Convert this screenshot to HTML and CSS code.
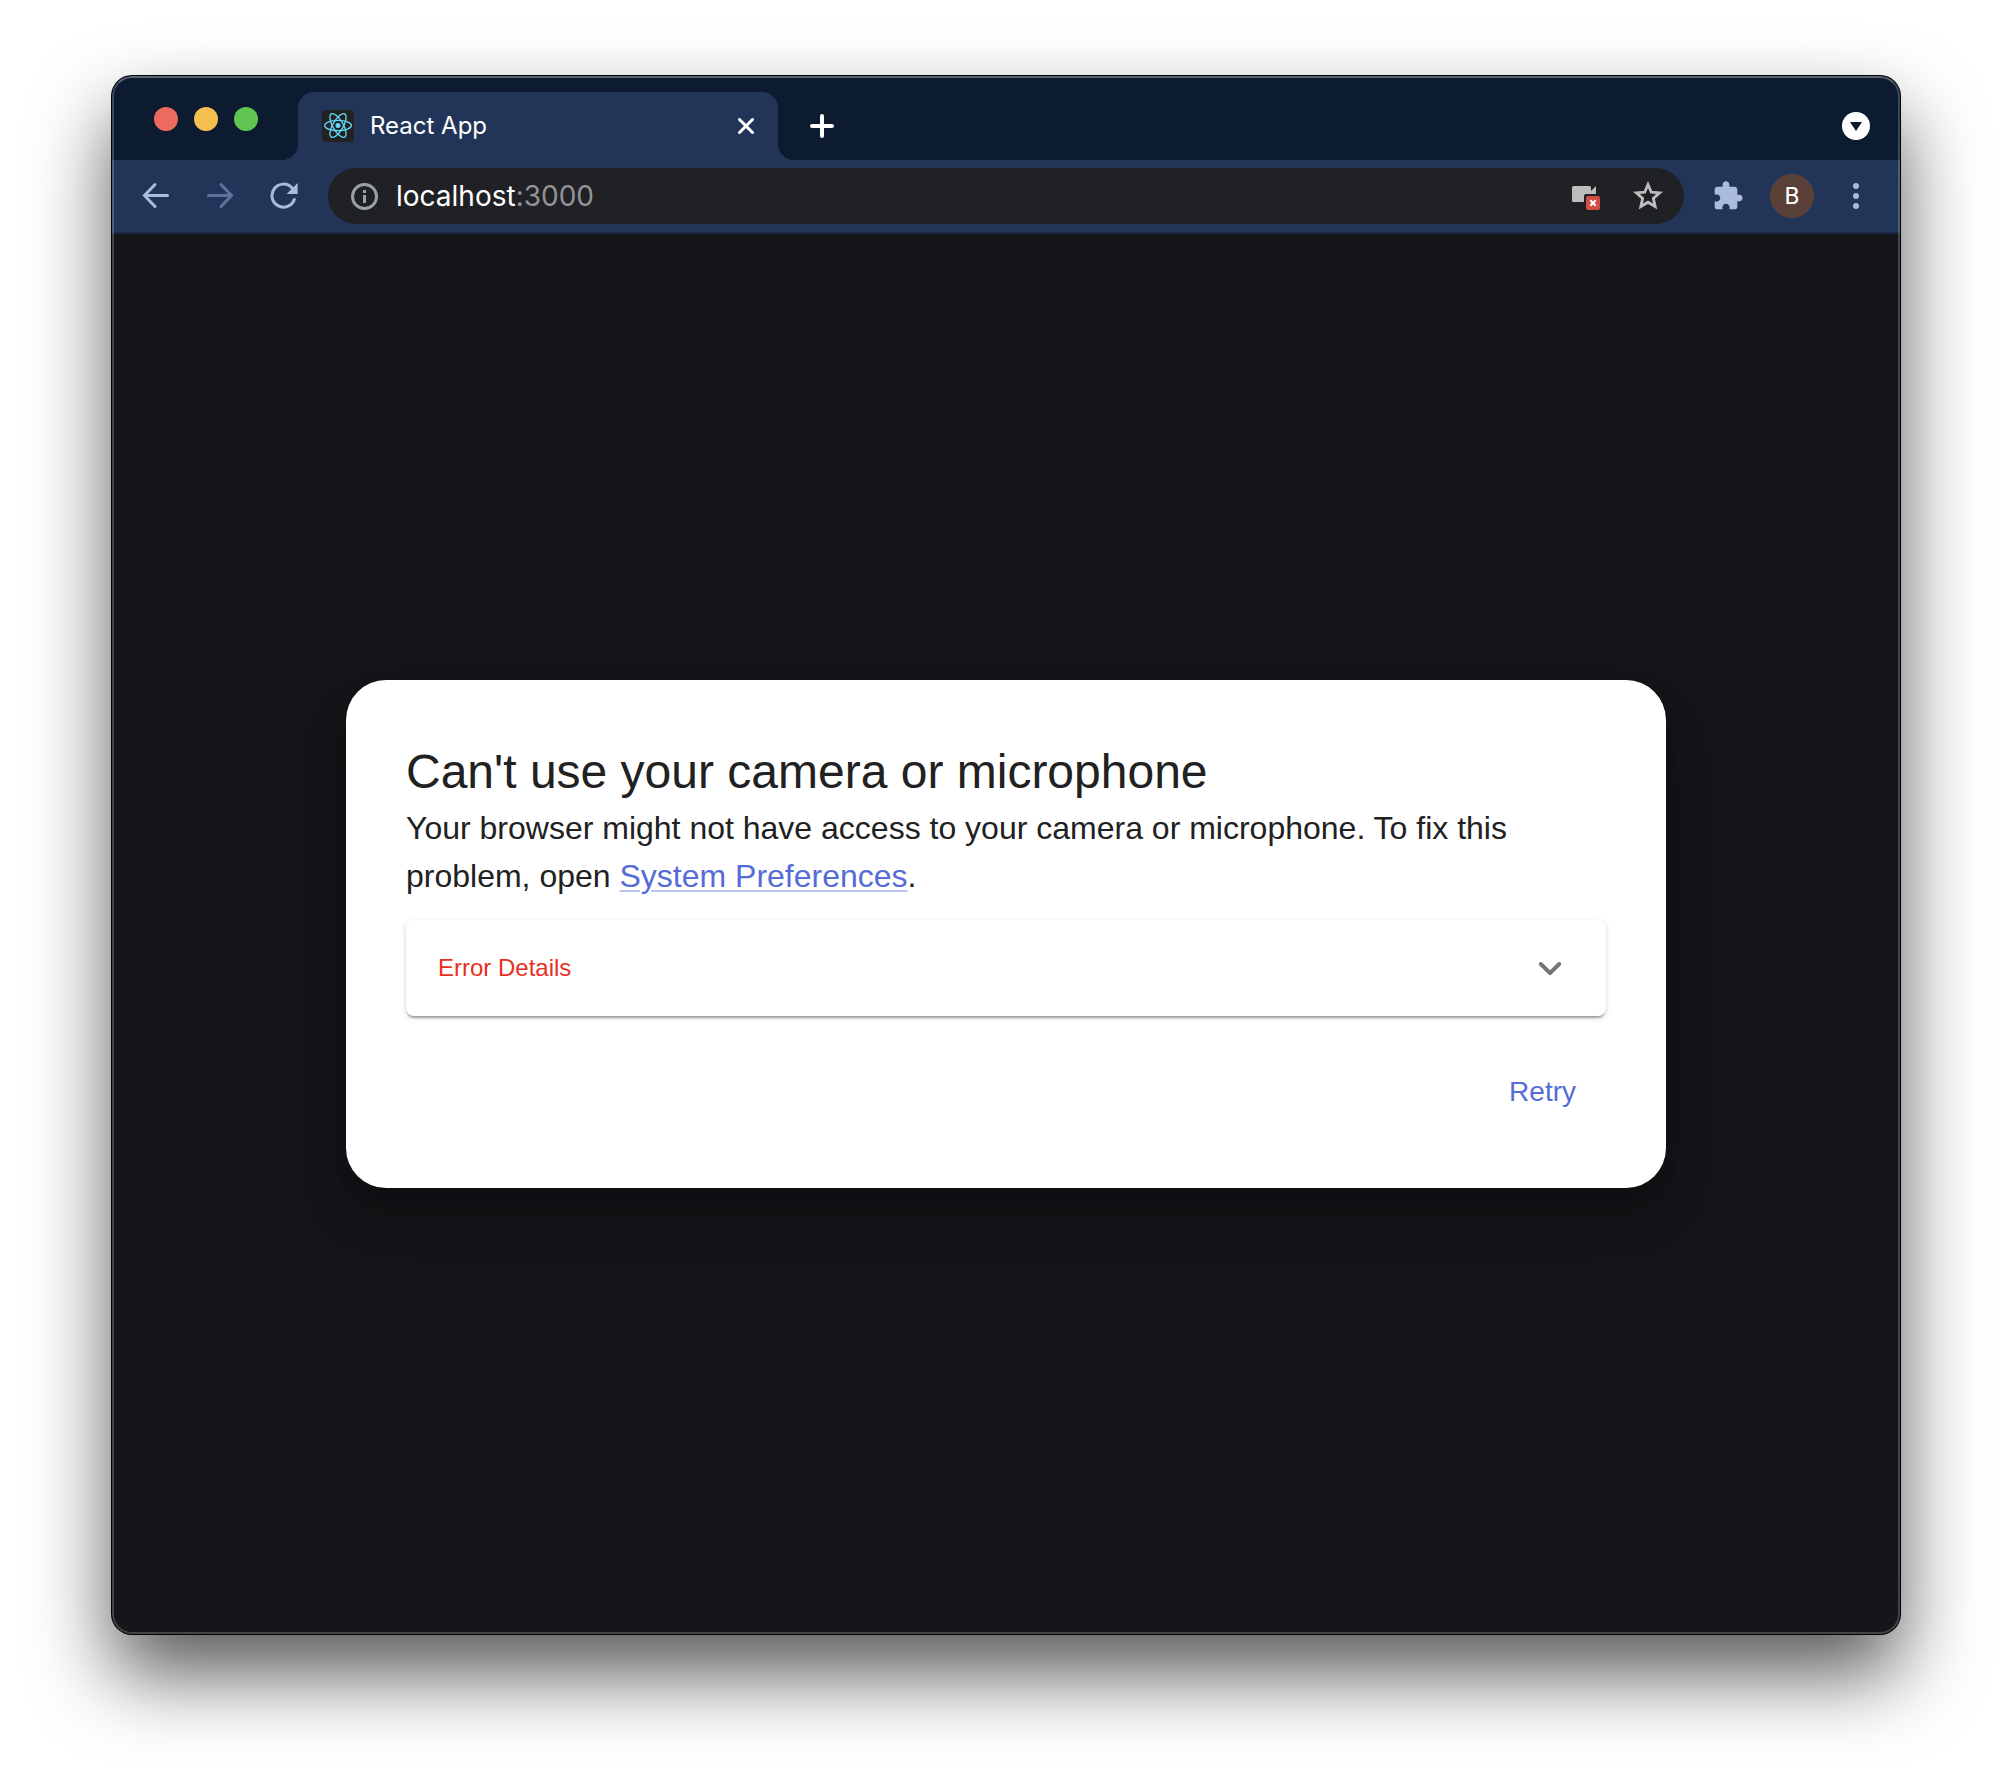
FILE: index.html
```html
<!DOCTYPE html>
<html lang="en">
<head>
<meta charset="utf-8">
<meta name="viewport" content="width=device-width, initial-scale=1">
<title>React App</title>
<link rel="stylesheet" href="styles.css">
</head>
<body>
<div class="window">
  <header class="tab-strip">
    <div class="lights">
      <button class="light light-close" aria-label="Close window"></button>
      <button class="light light-min" aria-label="Minimize window"></button>
      <button class="light light-max" aria-label="Zoom window"></button>
    </div>
    <div class="tab">
      <svg class="favicon" viewBox="0 0 32 32" aria-hidden="true">
        <rect width="32" height="32" rx="4" fill="#222"/>
        <g fill="none" stroke="#61dafb" stroke-width="1.3">
          <ellipse cx="16" cy="15.5" rx="13.4" ry="5.2"/>
          <ellipse cx="16" cy="15.5" rx="13.4" ry="5.2" transform="rotate(60 16 15.5)"/>
          <ellipse cx="16" cy="15.5" rx="13.4" ry="5.2" transform="rotate(120 16 15.5)"/>
        </g>
        <circle cx="16" cy="15.5" r="2.5" fill="#61dafb"/>
      </svg>
      <span class="tab-title">React App</span>
      <button class="icon-button tab-close" aria-label="Close tab">
        <svg width="16" height="16" viewBox="0 0 16 16" fill="none" stroke="#fff" stroke-width="3" stroke-linecap="round"><path d="M1.5 1.5l13 13M14.5 1.5l-13 13"/></svg>
      </button>
    </div>
    <button class="icon-button new-tab" aria-label="New tab">
      <svg width="24" height="24" viewBox="0 0 24 24" fill="none" stroke="#fff" stroke-width="4" stroke-linecap="round"><path d="M12 2v20M2 12h20"/></svg>
    </button>
    <button class="icon-button tab-search" aria-label="Search tabs">
      <svg width="28" height="28" viewBox="0 0 28 28"><circle cx="14" cy="14" r="14" fill="#fff"/><path d="M8 10h12l-6 9z" fill="#0c1b30"/></svg>
    </button>
  </header>

  <nav class="toolbar" aria-label="Browser toolbar">
    <button class="icon-button tool" aria-label="Back">
      <svg width="28" height="28" viewBox="0 0 28 28" fill="none" stroke="#abbbdb" stroke-width="3" stroke-linecap="round"><path d="M25.500 13.500H3M13 2.500L2.500 13.500 13 24.500"/></svg>
    </button>
    <button class="icon-button tool" aria-label="Forward" disabled>
      <svg width="28" height="28" viewBox="0 0 28 28" fill="none" stroke="#62729a" stroke-width="3" stroke-linecap="round"><path d="M2.500 13.500H25M15 2.500l10.500 11L15 24.500"/></svg>
    </button>
    <button class="icon-button tool" aria-label="Reload">
      <svg width="28" height="28" viewBox="0 0 28 28"><path d="M24.300 17.500A11.500 11.500 0 1 1 22 5.900" fill="none" stroke="#abbbdb" stroke-width="3" stroke-linecap="round"/><path d="M27.600 1v11H16.600z" fill="#abbbdb"/></svg>
    </button>
    <div class="address-bar">
      <button class="icon-button site-info" aria-label="View site information">
        <svg width="28" height="28" viewBox="0 0 28 28"><circle cx="14.500" cy="14.500" r="12" fill="none" stroke="#9aa0a6" stroke-width="3"/><path d="M13 8h3v3h-3zM13 13h3v8h-3z" fill="#9aa0a6"/></svg>
      </button>
      <div class="url" role="textbox" aria-label="Address" tabindex="0">localhost<span class="port">:3000</span></div>
      <button class="icon-button camera" aria-label="Camera blocked">
        <svg width="28" height="28" viewBox="0 0 28 28"><path d="M1.500 4H17.500Q19 4 19 5.500V9l5-5v12H12v4H1.500Q0 20 0 18.500V5.500Q0 4 1.500 4z" fill="#bdbdbd"/><rect x="12" y="12" width="16" height="16" rx="2" fill="#202124"/><rect x="14" y="14" width="14" height="14" rx="2" fill="#d14f42"/><path d="M18.300 18.300l5.400 5.400M23.700 18.300l-5.400 5.400" stroke="#fff" stroke-width="2"/></svg>
      </button>
      <button class="icon-button" aria-label="Bookmark this tab">
        <svg width="32" height="32" viewBox="0 0 32 32"><path d="M16 4.500l3.300 7.700 8.300.7-6.300 5.500 1.900 8.100L16 22.200l-7.200 4.300 1.900-8.100-6.300-5.500 8.300-.7z" fill="none" stroke="#bdbdbd" stroke-width="2.800"/></svg>
      </button>
    </div>
    <button class="icon-button tool" aria-label="Extensions">
      <svg width="32" height="32" viewBox="0 0 24 24"><path d="M20.500 11H19V7c0-1.100-.9-2-2-2h-4V3.500C13 2.120 11.880 1 10.500 1S8 2.120 8 3.500V5H4c-1.100 0-1.990.9-1.990 2v3.800H3.500c1.490 0 2.700 1.210 2.700 2.700s-1.210 2.700-2.700 2.700H2V20c0 1.100.9 2 2 2h3.800v-1.500c0-1.490 1.210-2.700 2.700-2.700 1.490 0 2.700 1.210 2.700 2.700V22H17c1.100 0 2-.9 2-2v-4h1.500c1.380 0 2.500-1.120 2.500-2.500S21.880 11 20.500 11z" fill="#abbbdb"/></svg>
    </button>
    <button class="icon-button tool" aria-label="Profile"><span class="avatar">B</span></button>
    <button class="icon-button tool" aria-label="Menu">
      <svg width="28" height="28" viewBox="0 0 28 28" fill="#abbbdb"><circle cx="14" cy="4" r="3"/><circle cx="14" cy="14" r="3"/><circle cx="14" cy="24" r="3"/></svg>
    </button>
  </nav>

  <main class="page">
    <section class="dialog" role="dialog" aria-labelledby="dialog-title">
      <h1 class="dialog-title" id="dialog-title">Can't use your camera or microphone</h1>
      <p class="dialog-text">Your browser might not have access to your camera or microphone. To fix this problem, open <a class="link" href="#preferences">System Preferences</a>.</p>
      <details class="accordion">
        <summary class="accordion-summary">
          <span>Error Details</span>
          <svg width="48" height="48" viewBox="0 0 24 24" aria-hidden="true"><path d="M15.880 9.290L12 13.170 8.120 9.290c-.39-.39-1.020-.39-1.410 0-.39.39-.39 1.020 0 1.410l4.590 4.590c.39.39 1.020.39 1.410 0l4.590-4.590c.39-.39.39-1.020 0-1.410-.39-.38-1.030-.39-1.420 0z" fill="#757575"/></svg>
        </summary>
      </details>
      <div class="dialog-actions">
        <button class="text-button">Retry</button>
      </div>
    </section>
  </main>
</div>
</body>
</html>
```
FILE: styles.css
```css
* {
  box-sizing: border-box;
}

body {
  margin: 0;
  min-height: 100vh;
  display: flex;
  padding: 76px 112px 148px;
  background: #fff;
  font-family: "Liberation Sans", Arial, sans-serif;
}

button {
  margin: 0;
  padding: 0;
  border: 0;
  background: none;
  font: inherit;
  color: inherit;
}

svg {
  display: block;
  flex: none;
}

.window {
  position: relative;
  flex: 1;
  min-width: 0;
  display: flex;
  flex-direction: column;
  border-radius: 20px;
  overflow: hidden;
  background: #151619;
  box-shadow: 0 0 0 1px #000, 0 40px 80px rgba(0, 0, 0, 0.66);
}

/* light rim drawn over the window content */
.window::after {
  content: "";
  position: absolute;
  inset: 0;
  border: 2px solid rgba(255, 255, 255, 0.2);
  border-top-color: rgba(255, 255, 255, 0.32);
  border-radius: inherit;
  pointer-events: none;
}

.icon-button {
  display: flex;
  align-items: center;
  justify-content: center;
}

/* Tab strip */
.tab-strip {
  display: flex;
  align-items: flex-end;
  height: 84px;
  padding-right: 12px;
  background: #0c1b30;
  font-family: Inter, Roboto, sans-serif;
}

.lights {
  display: flex;
  gap: 16px;
  width: 186px;
  height: 84px;
  padding: 31px 0 0 42px;
}

.light {
  width: 24px;
  height: 24px;
  border-radius: 50%;
}

.light-close { background: #ed6a5e; }
.light-min { background: #f5bf4f; }
.light-max { background: #61c554; }

.tab {
  position: relative;
  display: flex;
  align-items: center;
  width: 480px;
  height: 68px;
  padding: 0 16px 0 24px;
  border-radius: 16px 16px 0 0;
  background: #223558;
  color: #fff;
}

.tab::before,
.tab::after {
  content: "";
  position: absolute;
  bottom: 0;
  width: 16px;
  height: 16px;
}

.tab::before {
  right: 100%;
  background: radial-gradient(circle at 0 0, transparent 16px, #223558 16px);
}

.tab::after {
  left: 100%;
  background: radial-gradient(circle at 100% 0, transparent 16px, #223558 16px);
}

.favicon {
  width: 32px;
  height: 32px;
}

.tab-title {
  flex: 1;
  margin-left: 16px;
  font-size: 24px;
  line-height: 32px;
}

.tab-close {
  width: 32px;
  height: 32px;
}

.new-tab {
  width: 56px;
  height: 68px;
  margin-left: 16px;
}

.tab-search {
  width: 64px;
  height: 68px;
  margin-left: auto;
}

/* Toolbar */
.toolbar {
  display: flex;
  align-items: center;
  height: 74px;
  padding: 0 12px;
  border-bottom: 2px solid #1b2644;
  background: #223558;
  font-family: Inter, Roboto, sans-serif;
}

.tool {
  flex: none;
  width: 64px;
  height: 64px;
}

.address-bar {
  flex: 1;
  min-width: 0;
  display: flex;
  align-items: center;
  height: 56px;
  margin: 0 12px;
  padding: 0 20px;
  border-radius: 28px;
  background: #202124;
}

.site-info {
  width: 32px;
}

.url {
  flex: 1;
  margin-left: 16px;
  font-size: 28px;
  line-height: 36px;
  color: #fff;
}

.port {
  color: #919396;
}

.camera {
  margin-right: 32px;
}

.avatar {
  width: 44px;
  height: 44px;
  border-radius: 50%;
  background: #5b4038;
  color: #fff;
  font-family: Roboto, sans-serif;
  font-size: 24px;
  line-height: 44px;
  text-align: center;
}

/* Page */
.page {
  flex: 1;
  display: flex;
  align-items: center;
  justify-content: center;
  padding: 64px;
}

.dialog {
  width: 100%;
  max-width: 1320px;
  padding: 60px;
  border-radius: 40px;
  background: #fff;
  color: #212121;
  box-shadow:
    0 16px 20px -10px rgba(0, 0, 0, 0.2),
    0 32px 48px 4px rgba(0, 0, 0, 0.14),
    0 12px 60px 10px rgba(0, 0, 0, 0.12);
}

.dialog-title {
  margin: 0;
  font-size: 48px;
  font-weight: 400;
  line-height: 64px;
}

.dialog-text {
  margin: 0 0 20px;
  font-size: 32px;
  line-height: 48px;
}

.link {
  color: #556cd6;
  text-decoration: underline 2px rgba(85, 108, 214, 0.4);
  text-underline-offset: 3px;
}

.accordion {
  border-radius: 8px;
  background: #fff;
  box-shadow:
    0 4px 2px -2px rgba(0, 0, 0, 0.2),
    0 2px 2px rgba(0, 0, 0, 0.14),
    0 2px 6px rgba(0, 0, 0, 0.12);
}

.accordion-summary {
  display: flex;
  align-items: center;
  justify-content: space-between;
  min-height: 96px;
  padding: 0 32px;
  color: #e8301f;
  font-size: 24px;
  line-height: 40px;
  list-style: none;
  cursor: pointer;
}

.dialog-actions {
  display: flex;
  justify-content: flex-end;
  margin-top: 40px;
}

.text-button {
  padding: 12px 30px;
  color: #556cd6;
  font-size: 28px;
  line-height: 48px;
}
```
